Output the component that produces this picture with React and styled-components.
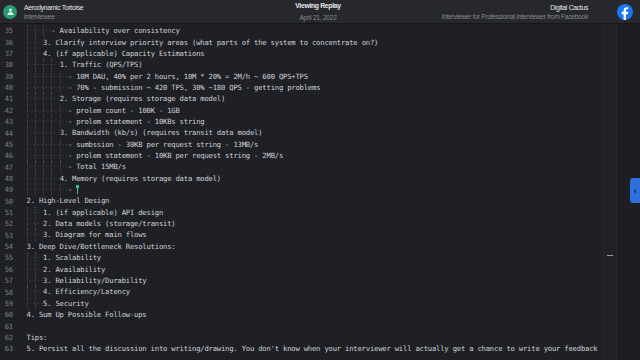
import React from "react";
import styled, { createGlobalStyle } from "styled-components";

const Global = createGlobalStyle`
  html, body { margin: 0; padding: 0; background: #1e2026; }
  body { width: 640px; height: 360px; overflow: hidden; }
`;

const Page = styled.div`
  width: 640px;
  height: 360px;
  display: flex;
  flex-direction: column;
  background: #1e2026;
  overflow: hidden;
`;

const Header = styled.header`
  height: 23px;
  flex: none;
  display: grid;
  grid-template-columns: 1fr auto 1fr;
  align-items: center;
  background: #26282d;
  border-bottom: 1px solid #16171b;
  padding: 0 7px 0 3px;
  font-family: "Liberation Sans", Arial, sans-serif;
`;

const Side = styled.div`
  display: flex;
  align-items: center;
  gap: ${(p) => p.$gap || 7}px;
  justify-content: ${(p) => (p.$right ? "flex-end" : "flex-start")};
`;

const Avatar = styled.div`
  width: 14px;
  height: 14px;
  border-radius: 50%;
  background: #2a9a70;
  display: flex;
  align-items: center;
  justify-content: center;
`;

const Who = styled.div`
  display: flex;
  flex-direction: column;
  align-items: ${(p) => (p.$align || "flex-start")};
  line-height: 9px;
`;

const Name = styled.div`
  font-size: 6.8px;
  letter-spacing: -0.3px;
  color: #e6e7ea;
  font-weight: ${(p) => (p.$bold ? 700 : 400)};
`;

const Sub = styled.div`
  font-size: 6.6px;
  letter-spacing: -0.25px;
  color: #868990;
  margin-top: ${(p) => p.$mt || 0}px;
`;

const FbLogo = styled.div`
  width: 16px;
  height: 16px;
  margin-left: 22px;
`;

const Body = styled.div`
  flex: 1;
  display: flex;
  min-height: 0;
`;

const Editor = styled.div`
  width: 603px;
  flex: none;
  display: flex;
  padding-top: 1.3px;
  overflow: hidden;
  font-family: "DejaVu Sans Mono", "Liberation Mono", monospace;
  font-size: 7.2px;
  letter-spacing: -0.19px;
  line-height: 11.357px;
`;

const Gutter = styled.div`
  width: 13px;
  flex: none;
  text-align: right;
  color: #7b7f88;
`;

const Code = styled.div`
  flex: 1;
  padding-left: 13.5px;
  color: #d0d2d6;
  white-space: pre;
`;

const Line = styled.div`
  height: 11.357px;
  display: flex;
  position: relative;
`;

const Guide = styled.span`
  display: inline-block;
  width: 8.29px;
  height: 100%;
  border-left: 1px dotted #43464e;
  box-sizing: border-box;
  color: #454951;
`;

const Text = styled.span``;

const Cursor = styled.span`
  position: relative;
  display: inline-block;
  width: 1px;
  height: 8px;
  margin-top: 2px;
  margin-left: 0.5px;
  background: #33c2a0;
  &::before {
    content: "";
    position: absolute;
    top: -1px;
    left: -1px;
    width: 3px;
    height: 3px;
    background: #33c2a0;
  }
`;

const Strip = styled.div`
  width: 14px;
  flex: none;
  background: #202228;
  border-left: 1px solid #25272d;
  border-right: 1px solid #26282e;
  box-sizing: border-box;
  display: flex;
  flex-direction: column;
  align-items: center;
  padding-top: 231px;
`;

const ScrollMark = styled.div`
  width: 6px;
  height: 1px;
  background: #9a9da4;
`;

const Rail = styled.div`
  flex: 1;
  background: #1c1e23;
  display: flex;
  flex-direction: column;
  align-items: flex-end;
  justify-content: center;
  padding-bottom: 3px;
`;

const Tab = styled.div`
  width: 10px;
  height: 25px;
  background: #2f6fdd;
  border-radius: 3px 0 0 3px;
  display: flex;
  align-items: center;
  justify-content: center;
`;

const TabDot = styled.div`
  width: 2px;
  height: 4px;
  border-radius: 1px;
  background: #1a3f86;
`;

const lines = [
  [35, 6, "- Availability over consistency"],
  [36, 4, "3. Clarify interview priority areas (what parts of the system to concentrate on?)"],
  [37, 4, "4. (if applicable) Capacity Estimations"],
  [38, 8, "1. Traffic (QPS/TPS)"],
  [39, 10, "- 10M DAU, 40% per 2 hours, 10M * 20% = 2M/h ~ 600 QPS+TPS"],
  [40, 10, "- 70% - submission ~ 420 TPS, 30% ~180 QPS - getting problems"],
  [41, 8, "2. Storage (requires storage data model)"],
  [42, 10, "- prolem count - 100K - 1GB"],
  [43, 10, "- prolem statement - 10KBs string"],
  [44, 8, "3. Bandwidth (kb/s) (requires transit data model)"],
  [45, 10, "- sumbssion - 30KB per request string - 13MB/s"],
  [46, 10, "- prolem statement - 10KB per request string - 2MB/s"],
  [47, 10, "- Total 15MB/s"],
  [48, 8, "4. Memory (requires storage data model)"],
  [49, 10, "- ", true],
  [50, 0, "2. High-Level Design"],
  [51, 4, "1. (if applicable) API design"],
  [52, 4, "2. Data models (storage/transit)"],
  [53, 4, "3. Diagram for main flows"],
  [54, 0, "3. Deep Dive/Bottleneck Resolutions:"],
  [55, 4, "1. Scalability"],
  [56, 4, "2. Availability"],
  [57, 4, "3. Reliability/Durability"],
  [58, 4, "4. Efficiency/Latency"],
  [59, 4, "5. Security"],
  [60, 0, "4. Sum Up Possible Follow-ups"],
  [61, 0, ""],
  [62, 0, "Tips:"],
  [63, 0, "5. Persist all the discussion into writing/drawing. You don't know when your interviewer will actually get a chance to write your feedback"],
];

function PersonIcon() {
  return (
    <svg width="9" height="9" viewBox="0 0 24 24" fill="#e8f3ee">
      <circle cx="12" cy="8" r="4.2" />
      <path d="M4 20c0-4 3.6-6.5 8-6.5s8 2.5 8 6.5v1H4z" />
    </svg>
  );
}

function Facebook() {
  return (
    <svg width="16" height="16" viewBox="0 0 24 24">
      <circle cx="12" cy="12" r="12" fill="#1877f2" />
      <path
        d="M13.4 24V15.2h2.9l.45-3.4h-3.35V9.7c0-.98.28-1.65 1.68-1.65h1.8V5.02c-.31-.04-1.38-.13-2.62-.13-2.6 0-4.37 1.58-4.37 4.49v2.42H7v3.4h2.89V24z"
        fill="#fff"
      />
    </svg>
  );
}

export default function App() {
  return (
    <Page>
      <Global />
      <Header>
        <Side $gap={7}>
          <Avatar>
            <PersonIcon />
          </Avatar>
          <Who>
            <Name>Aerodynamic Tortoise</Name>
            <Sub $mt={0}>interviewee</Sub>
          </Who>
        </Side>
        <Who $align="center">
          <Name $bold>Viewing Replay</Name>
          <Sub $mt={3}>April 21, 2022</Sub>
        </Who>
        <Side $right $gap={0}>
          <Who $align="flex-end">
            <Name>Digital Cactus</Name>
            <Sub>Interviewer for Professional Interviewer from Facebook</Sub>
          </Who>
          <FbLogo>
            <Facebook />
          </FbLogo>
        </Side>
      </Header>
      <Body>
        <Editor>
          <Gutter>
            {lines.map(([n]) => (
              <div key={n}>{n}</div>
            ))}
          </Gutter>
          <Code>
            {lines.map(([n, indent, text, cursor]) => (
              <Line key={n}>
                {Array.from({ length: indent / 2 }).map((_, i) => (
                  <Guide key={i}>··</Guide>
                ))}
                <Text>{text}</Text>
                {cursor && <Cursor />}
              </Line>
            ))}
          </Code>
        </Editor>
        <Strip>
          <ScrollMark />
        </Strip>
        <Rail>
          <Tab>
            <TabDot />
          </Tab>
        </Rail>
      </Body>
    </Page>
  );
}
